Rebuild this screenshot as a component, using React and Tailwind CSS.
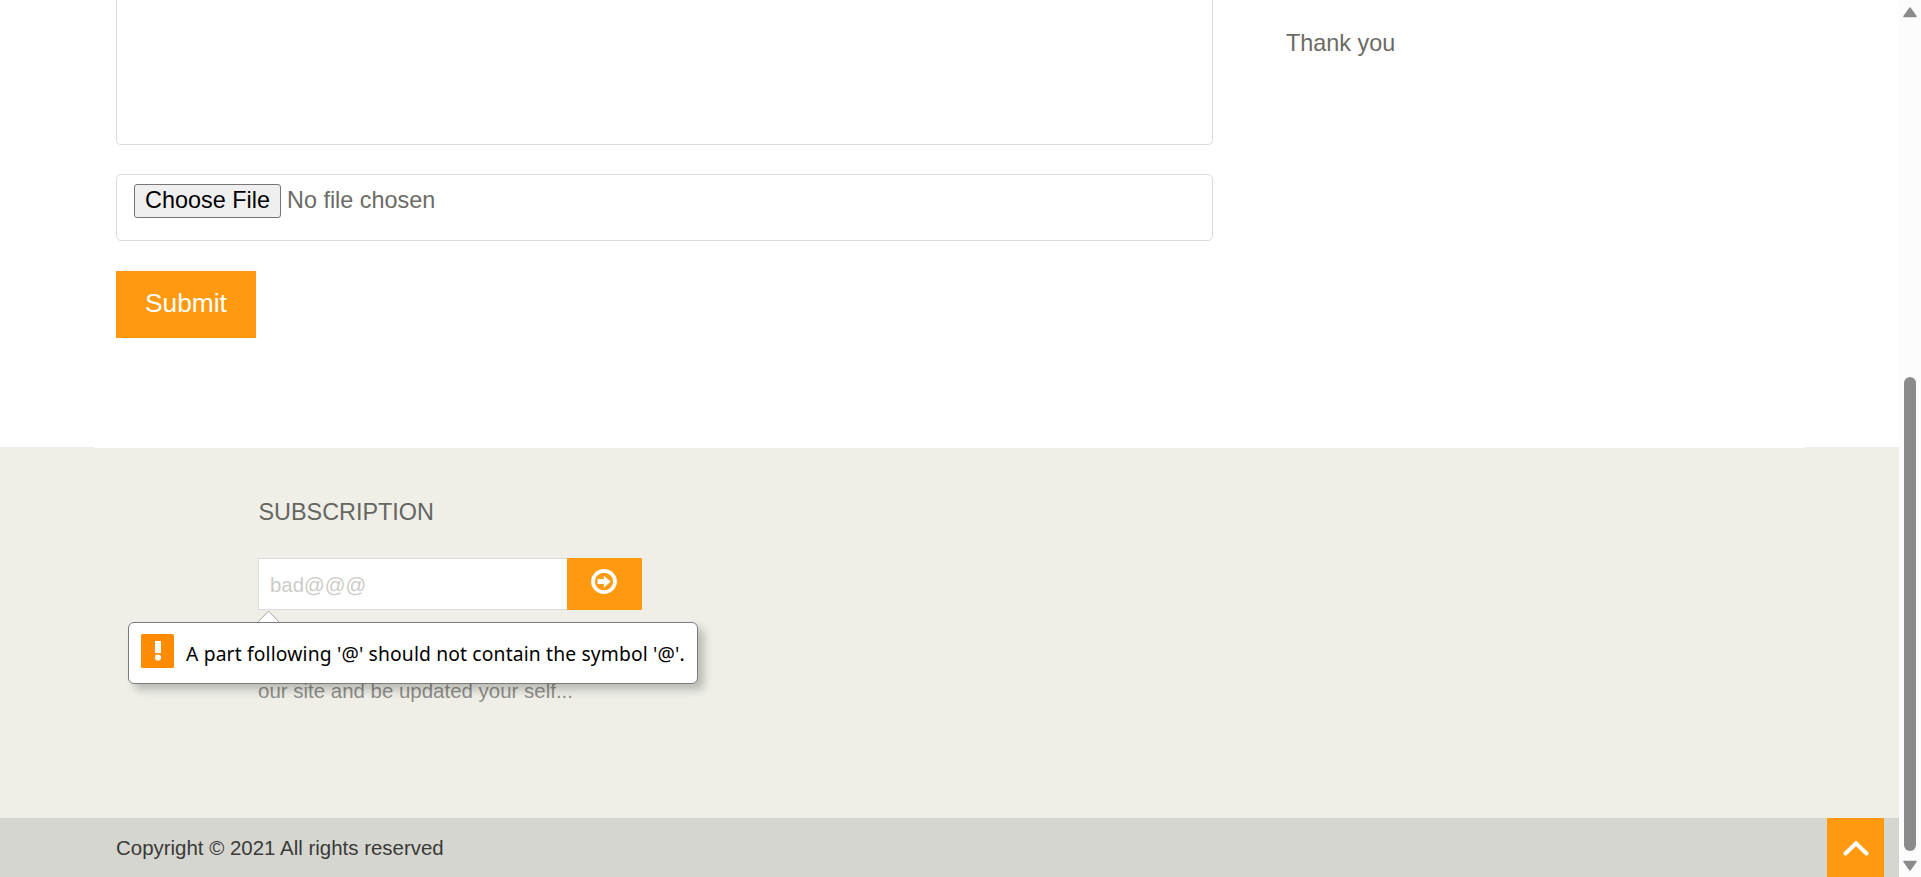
import React from "react";

function FileField() {
  return (
    <div className="mt-[29px] flex h-[67px] w-[1097px] items-start gap-1.5 rounded-[5px] border border-[#dcdcdc] pt-[9px] pl-[17px]">
      <button
        type="button"
        className="flex h-[34px] w-[147px] items-center justify-center rounded-[3px] border border-[#767676] bg-[#efefef] text-[23.4px] whitespace-nowrap text-black"
      >
        Choose File
      </button>
      <span className="flex h-[34px] items-center text-[23.4px] whitespace-nowrap text-[#6b6b66]">No file chosen</span>
    </div>
  );
}

function ValidationBubble() {
  return (
    <div className="absolute top-[64px] left-[-130px] z-10 flex h-[62px] w-[570px] items-start rounded-[6px] border border-[#7b7b7b] bg-white pt-[11px] pl-3 shadow-[6px_6px_8px_rgba(0,0,0,0.22)]">
      <svg className="absolute top-[-13px] left-[128px] h-[12px] w-[23px]" viewBox="0 0 23 12">
        <path d="M1 12L11.5 1L22 12Z" fill="#fff" />
        <path d="M1 12L11.5 1L22 12" fill="none" stroke="#a5a5a5" strokeWidth="1" />
      </svg>
      <svg className="h-[34px] w-[33px] shrink-0" viewBox="0 0 33 34">
        <rect width="33" height="34" rx="1.5" fill="#ff8c00" />
        <rect x="14" y="7" width="6" height="12" fill="#fff" />
        <circle cx="17" cy="23.5" r="3.1" fill="#fff" />
      </svg>
      <span className="mt-[6px] ml-3 font-['Noto_Sans',sans-serif] text-[19.3px] leading-[28px] tracking-[0.15px] whitespace-nowrap text-black">
        A part following '@' should not contain the symbol '@'.
      </span>
    </div>
  );
}

function Subscription() {
  return (
    <section className="ml-[258px] pt-[49px]">
      <h2 className="pl-[0.5px] text-[23.4px] leading-[30px] text-[#666661]">SUBSCRIPTION</h2>
      <div className="relative mt-[31px] flex h-[52px] w-[384px]">
        <div className="flex w-[309px] items-center border border-r-0 border-[#dcdcdc] bg-white pt-[2px] pl-[11px] text-[20.4px] text-[#ccccc7]">
          bad@@@
        </div>
        <button type="button" className="flex w-[75px] justify-center bg-[#ff9910] pt-[11px] pr-px">
          <svg className="h-[25px] w-[26px]" viewBox="0 0 26 25">
            <ellipse cx="13" cy="12.5" rx="11" ry="10.6" fill="none" stroke="#fff" strokeWidth="3.8" />
            <path d="M6.5 10H12.8V6.7L19.8 12.5L12.8 18.7V15H6.5Z" fill="#fff" />
          </svg>
        </button>
        <ValidationBubble />
      </div>
      <p className="mt-[68px] text-[20.47px] leading-[26px] text-[#8e8e89]">our site and be updated your self...</p>
    </section>
  );
}

function Scrollbar() {
  return (
    <aside className="flex w-[22px] flex-col items-center bg-[#fcfcfc]">
      <svg className="mt-[7px] h-[11px] w-[14px]" viewBox="0 0 14 11">
        <path d="M7 1L13 9.5H1Z" fill="#8b8b8b" stroke="#8b8b8b" strokeWidth="1.5" strokeLinejoin="round" />
      </svg>
      <div className="mt-[359px] h-[474px] w-3 rounded-full bg-[#8b8b8b]" />
      <svg className="mt-[9px] h-[11px] w-[14px]" viewBox="0 0 14 11">
        <path d="M7 10L13 1.5H1Z" fill="#8b8b8b" stroke="#8b8b8b" strokeWidth="1.5" strokeLinejoin="round" />
      </svg>
    </aside>
  );
}

export default function App() {
  return (
    <div className="flex h-[877px] w-[1921px] overflow-hidden bg-white font-['Liberation_Sans',Arial,sans-serif]">
      <div className="flex w-[1899px] flex-col">
        <main className="flex h-[447px] pl-[116px]">
          <form className="w-[1097px]">
            <div className="h-[145px] rounded-b-[5px] border border-t-0 border-[#dcdcdc]" />
            <FileField />
            <button type="button" className="mt-[30px] flex h-[67px] w-[140px] items-center justify-center bg-[#ff9910] pb-[2px] text-[26.3px] text-white">
              Submit
            </button>
          </form>
          <p className="mt-[28px] ml-[73px] text-[23.4px] leading-[30px] text-[#6b6b66]">Thank you</p>
        </main>
        <footer className="flex h-[430px] flex-col bg-[#efefe8]">
          <div className="mr-[94px] ml-[94px] h-px bg-white" />
          <div className="h-[370px]">
            <Subscription />
          </div>
          <div className="flex h-[59px] items-center justify-between bg-[#d5d6d0] pr-[15px] pl-[116px]">
            <span className="pt-[2px] text-[20.47px] text-[#3a3a37]">Copyright © 2021 All rights reserved</span>
            <button type="button" className="flex h-full w-[57px] justify-center bg-[#ff9910] pt-[22px]">
              <svg className="h-[16px] w-[26px]" viewBox="0 0 26 16">
                <path d="M2.5 13.5L13 3.2L23.5 13.5" fill="none" stroke="#fff" strokeWidth="4" strokeLinecap="round" />
              </svg>
            </button>
          </div>
        </footer>
      </div>
      <Scrollbar />
    </div>
  );
}
